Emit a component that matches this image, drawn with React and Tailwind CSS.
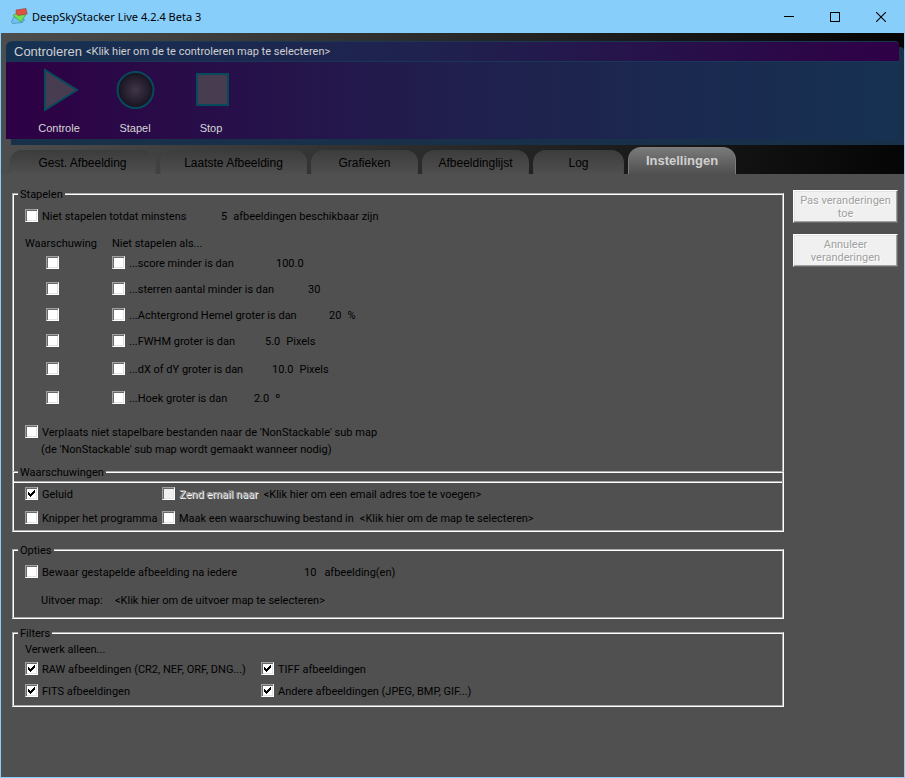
import React from "react";

function Check({ id, label, checked = false, disabled = false, className = "" }) {
  return (
    <span className={`flex items-center gap-1 whitespace-nowrap ${className}`}>
      <span className="mb-[3px] grid">
        <input
          id={id}
          type="checkbox"
          defaultChecked={checked}
          disabled={disabled}
          aria-label={label ? undefined : "Waarschuwing"}
          className="peer col-start-1 row-start-1 h-[13px] w-[13px] appearance-none border border-t-[#a0a0a0] border-l-[#a0a0a0] border-r-white border-b-white bg-white shadow-[inset_1px_1px_0_#696969,inset_-1px_-1px_0_#e3e3e3] disabled:bg-[#f0f0f0]"
        />
        <svg
          viewBox="0 0 13 13"
          className="pointer-events-none invisible col-start-1 row-start-1 h-[13px] w-[13px] peer-checked:visible"
          shapeRendering="crispEdges"
          aria-hidden="true"
        >
          <path d="M3 5h1v1h1v1h1v-1h1v-1h1v-1h1v-1h1v3h-1v1h-1v1h-1v1h-1v1h-1v-1h-1v-1h-1z" fill="#000" />
        </svg>
      </span>
      {label && (
        <label
          htmlFor={id}
          className={disabled ? "text-[#a0a0a0] [text-shadow:1px_1px_0_#ffffff]" : ""}
        >
          {label}
        </label>
      )}
    </span>
  );
}

function Value({ children }) {
  return (
    <button type="button" className="whitespace-nowrap">
      {children}
    </button>
  );
}

function Link({ children, className = "" }) {
  return (
    <a href="#map" className={`whitespace-nowrap ${className}`}>
      {children}
    </a>
  );
}

function Group({ title, className = "", children }) {
  return (
    <fieldset className={`min-w-0 border-2 border-white pl-[11px] [border-style:groove] ${className}`}>
      <legend className="-ml-[7px] h-[14px] px-0.5 leading-4">{title}</legend>
      {children}
    </fieldset>
  );
}

function Row({ className = "", children }) {
  return <div className={`flex items-center pt-0.5 ${className}`}>{children}</div>;
}

const rules = [
  { id: "score", label: "...score minder is dan", value: "100.0", width: "w-[164px]", height: "h-[26px]" },
  { id: "sterren", label: "...sterren aantal minder is dan", value: "30", width: "w-[196px]", height: "h-[26px]" },
  { id: "hemel", label: "...Achtergrond Hemel groter is dan", value: "20", unit: "%", width: "w-[217px]", height: "h-[26px]" },
  { id: "fwhm", label: "...FWHM groter is dan", value: "5.0", unit: "Pixels", width: "w-[153px]", height: "h-[26px]" },
  { id: "dxdy", label: "...dX of dY groter is dan", value: "10.0", unit: "Pixels", width: "w-[160px]", height: "h-[29px]" },
  { id: "hoek", label: "...Hoek groter is dan", value: "2.0", unit: "º", width: "w-[142px]", height: "h-[29px]" },
];

const tabs = [
  { label: "Gest. Afbeelding", width: "w-[147px]" },
  { label: "Laatste Afbeelding", width: "w-[147px]" },
  { label: "Grafieken", width: "w-[107px]" },
  { label: "Afbeeldinglijst", width: "w-[107px]" },
  { label: "Log", width: "w-[91px]" },
];

function TitleBar() {
  return (
    <header className="flex h-[33px] items-center bg-[#87cefa] pr-px pl-[10px] text-black">
      <svg viewBox="0 0 18 18" className="mr-1 h-[18px] w-[18px]" aria-hidden="true">
        <path d="M4 8.500L1.500 14l1 1.500 10-1 2-3z" fill="#6cc4ee" stroke="#3d7fa8" strokeWidth=".6" />
        <path d="M3 7.500l4-2.500 8.500 2-4.500 7z" fill="#6fe04f" stroke="#3d8a45" strokeWidth=".6" />
        <path d="M6 2l10-1.500 1.200 5.500-9 1.500-2-1.500z" fill="#dd5340" stroke="#95423c" strokeWidth=".6" />
      </svg>
      <h1 className="font-['Noto_Sans',sans-serif] text-[11px] leading-4">DeepSkyStacker Live 4.2.4 Beta 3</h1>
      <div className="ml-auto flex h-full">
        <button type="button" aria-label="Minimaliseren" className="grid w-[46px] place-items-center">
          <svg viewBox="0 0 10 10" className="h-[10px] w-[10px]" shapeRendering="crispEdges"><path d="M0 4.5h10" stroke="#000" /></svg>
        </button>
        <button type="button" aria-label="Maximaliseren" className="grid w-[46px] place-items-center">
          <svg viewBox="0 0 10 10" className="h-[10px] w-[10px]" shapeRendering="crispEdges"><path d="M.5.5h9v9h-9z" fill="none" stroke="#000" /></svg>
        </button>
        <button type="button" aria-label="Sluiten" className="grid w-[46px] place-items-center">
          <svg viewBox="0 0 10 10" className="h-[10px] w-[10px]"><path d="M0 0l10 10M10 0L0 10" stroke="#000" strokeWidth="1.1" /></svg>
        </button>
      </div>
    </header>
  );
}

function ToolButton({ label, children }) {
  return (
    <button type="button" className="flex w-[76px] flex-col items-center font-['Liberation_Sans',sans-serif] text-[11px] leading-[14px] text-[#d6d6d6]">
      <svg viewBox="0 0 44 44" className="mb-[9px] h-11 w-11" aria-hidden="true">{children}</svg>
      {label}
    </button>
  );
}

function Toolbar() {
  return (
    <section className="mx-[5px] rounded-tl-md rounded-tr-[4px] shadow-[5px_6px_0_#18304a]">
      <div className="flex h-[21px] items-center gap-1 rounded-tl-md rounded-tr-[4px] border-y border-[#1a3656] bg-linear-to-r/srgb from-[#163252] via-[#20204e] to-[#2f0046] pl-2 text-[#d0d0d0]">
        <h2 className="font-['Liberation_Sans',sans-serif] text-[13px] leading-4">Controleren</h2>
        <Link>&lt;Klik hier om de te controleren map te selecteren&gt;</Link>
      </div>
      <div className="flex h-[77px] bg-linear-to-r/srgb from-[#2e0045] via-[#201f4d] to-[#163252] pt-[6px] pl-[15px]">
        <ToolButton label="Controle">
          <path d="M8 2v40l32-20z" fill="#483c50" stroke="#064a5c" strokeWidth="2" />
        </ToolButton>
        <ToolButton label="Stapel">
          <defs>
            <radialGradient id="disc">
              <stop offset="0" stopColor="#40364a" />
              <stop offset="1" stopColor="#17121f" />
            </radialGradient>
          </defs>
          <circle cx="22.5" cy="22" r="18" fill="url(#disc)" stroke="#064a5c" strokeWidth="2" />
        </ToolButton>
        <ToolButton label="Stop">
          <path d="M8 6h31v31h-31z" fill="#483c50" stroke="#064a5c" strokeWidth="2" />
        </ToolButton>
      </div>
    </section>
  );
}

function Tabs() {
  return (
    <nav role="tablist" className="mt-2 flex h-[27px] items-end gap-1 pl-2 font-['Liberation_Sans',sans-serif] text-[12px] text-black">
      {tabs.map((tab) => (
        <button
          key={tab.label}
          type="button"
          role="tab"
          aria-selected="false"
          className={`h-6 flex-none rounded-t-[13px] border-x border-x-[#484848] bg-linear-to-b from-[#3c3c3c] to-[#4f4f4f] pt-0.5 ${tab.width}`}
        >
          {tab.label}
        </button>
      ))}
      <button
        type="button"
        role="tab"
        aria-selected="true"
        className="h-[27px] w-[108px] flex-none rounded-t-[13px] border-x border-t border-[#7c7c7c] bg-linear-to-b from-[#7a7a7a] to-[#505050] text-[13px] font-bold text-[#d0d0d0]"
      >
        Instellingen
      </button>
    </nav>
  );
}

function ActionButton({ children }) {
  return (
    <button
      type="button"
      disabled
      className="border border-t-white border-l-white border-r-[#696969] border-b-[#696969] bg-[#f0f0f0] px-1 pt-[3px] pb-0.5 leading-[13px] text-[#a0a0a0] shadow-[inset_-1px_-1px_0_#a0a0a0,inset_1px_1px_0_#e3e3e3] [text-shadow:1px_1px_0_#ffffff]"
    >
      {children}
    </button>
  );
}

export default function App() {
  return (
    <div className="flex min-h-screen flex-col bg-[#87cefa] font-['Roboto','DejaVu_Sans',sans-serif] text-[11px] leading-[14px] text-black">
      <TitleBar />
      <div className="mx-px mb-px flex flex-1 flex-col overflow-hidden bg-[#505050]">
        <div className="bg-linear-to-r/srgb from-[#4d4d4d] to-[#050505] pt-2">
          <Toolbar />
          <Tabs />
        </div>
        <main className="flex items-start gap-[9px] pt-[13px] pr-1.5 pl-[11px]">
          <div className="min-w-0 flex-1">
            <Group title="Stapelen" className="pb-6">
              <Row className="h-[30px] gap-1.5">
                <div className="flex items-center">
                  <Check id="minimum" label="Niet stapelen totdat minstens" className="w-[196px]" />
                  <Value>5</Value>
                </div>
                <span>afbeeldingen beschikbaar zijn</span>
              </Row>
              <Row className="mt-1 h-[15px]">
                <span className="w-[87px]">Waarschuwing</span>
                <span>Niet stapelen als...</span>
              </Row>
              {rules.map((rule) => (
                <Row key={rule.id} className={rule.height}>
                  <Check id={`waarschuw-${rule.id}`} className="w-[87px] pl-[21px]" />
                  <Check id={rule.id} label={rule.label} className={rule.width} />
                  <div className="flex gap-1.5">
                    <Value>{rule.value}</Value>
                    {rule.unit && <span>{rule.unit}</span>}
                  </div>
                </Row>
              ))}
              <Row className="mt-[11px] h-[18px]">
                <Check id="verplaats" label="Verplaats niet stapelbare bestanden naar de 'NonStackable' sub map" />
              </Row>
              <p className="h-4 pt-0.5 pl-4">(de 'NonStackable' sub map wordt gemaakt wanneer nodig)</p>
            </Group>

            <Group title="Waarschuwingen" className="-mt-[18px] pt-[3px]">
              <Row className="h-6">
                <Check id="geluid" label="Geluid" checked className="w-[137px]" />
                <div className="flex items-center gap-1.5">
                  <Check id="email" label="Zend email naar" disabled />
                  <Link>&lt;Klik hier om een email adres toe te voegen&gt;</Link>
                </div>
              </Row>
              <Row className="h-6">
                <Check id="knipper" label="Knipper het programma" className="w-[137px]" />
                <div className="flex items-center gap-1.5">
                  <Check id="bestand" label="Maak een waarschuwing bestand in" />
                  <Link>&lt;Klik hier om de map te selecteren&gt;</Link>
                </div>
              </Row>
            </Group>

            <Group title="Opties" className="mt-[11px] pt-px pb-[3px]">
              <Row className="h-7 gap-2">
                <div className="flex items-center">
                  <Check id="bewaar" label="Bewaar gestapelde afbeelding na iedere" className="w-[279px]" />
                  <Value>10</Value>
                </div>
                <span>afbeelding(en)</span>
              </Row>
              <Row className="h-7 pl-4">
                <span className="w-[74px]">Uitvoer map:</span>
                <Link>&lt;Klik hier om de uitvoer map te selecteren&gt;</Link>
              </Row>
            </Group>

            <Group title="Filters" className="mt-[7px] pb-0.5">
              <p className="h-[18px] pt-[3px]">Verwerk alleen...</p>
              <Row className="h-[21px]">
                <Check id="raw" label="RAW afbeeldingen (CR2, NEF, ORF, DNG...)" checked className="w-[236px]" />
                <Check id="tiff" label="TIFF afbeeldingen" checked />
              </Row>
              <Row className="h-6">
                <Check id="fits" label="FITS afbeeldingen" checked className="w-[236px]" />
                <Check id="andere" label="Andere afbeeldingen (JPEG, BMP, GIF...)" checked />
              </Row>
            </Group>
          </div>
          <aside className="flex w-[105px] flex-none flex-col gap-[11px] pt-[3px]">
            <ActionButton>Pas veranderingen toe</ActionButton>
            <ActionButton>Annuleer veranderingen</ActionButton>
          </aside>
        </main>
      </div>
    </div>
  );
}
